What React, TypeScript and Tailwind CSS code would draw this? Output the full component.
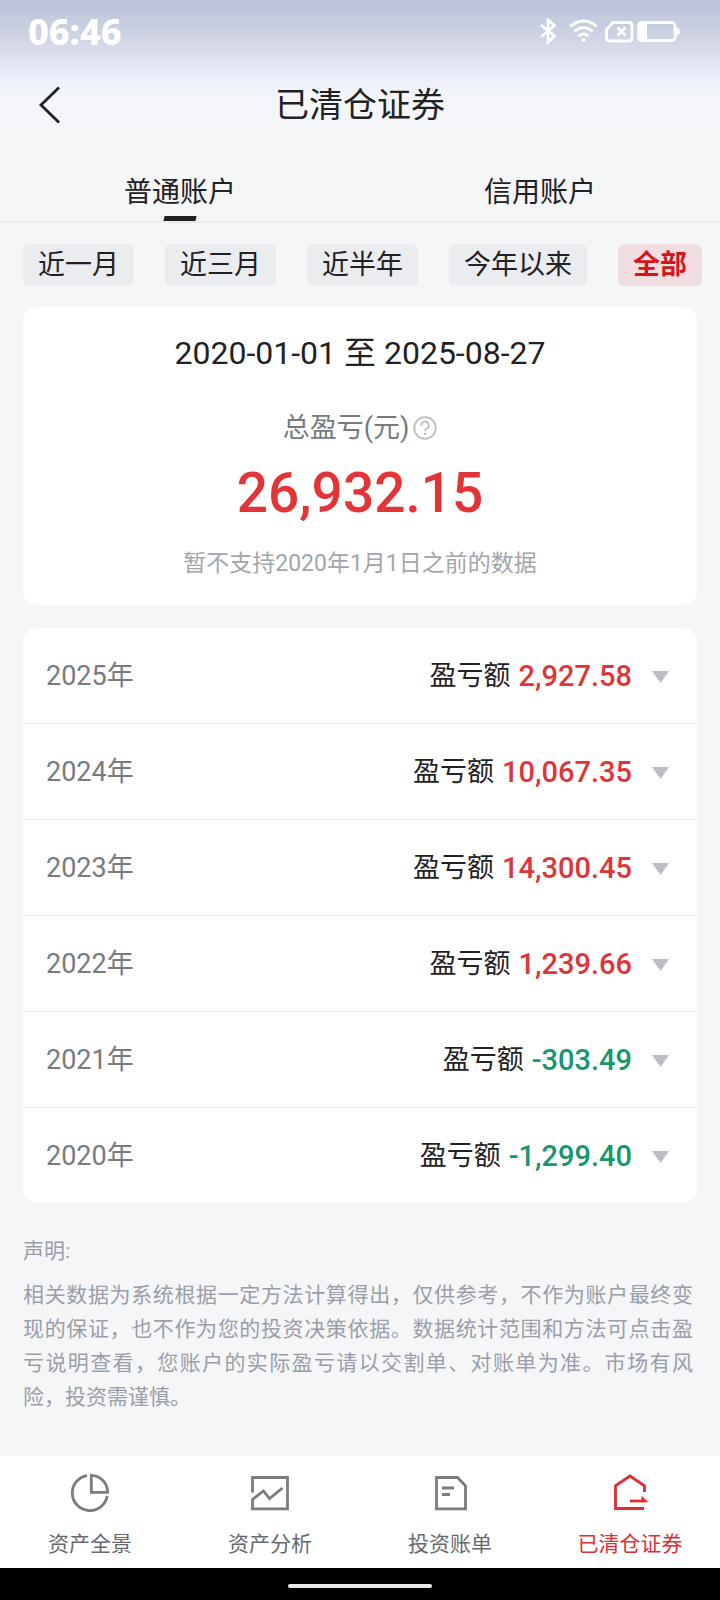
import React, { useState } from "react";
import clsx from "clsx";

interface YearProfit {
  year: number;
  amount: string;
}

interface NavItem {
  label: string;
  icon: React.ReactNode;
  active?: boolean;
}

const ACCOUNTS = ["普通账户", "信用账户"];
const RANGES = ["近一月", "近三月", "近半年", "今年以来", "全部"];

const YEARS: YearProfit[] = [
  { year: 2025, amount: "2,927.58" },
  { year: 2024, amount: "10,067.35" },
  { year: 2023, amount: "14,300.45" },
  { year: 2022, amount: "1,239.66" },
  { year: 2021, amount: "-303.49" },
  { year: 2020, amount: "-1,299.40" },
];

const NAV_ITEMS: NavItem[] = [
  {
    label: "资产全景",
    icon: (
      <>
        <path d="M17 2.6A17.6 17.6 0 1 0 37.2 23" />
        <path d="M21.3 2.4V19.3H37.6A16.6 16.6 0 0 0 21.3 2.4Z" />
      </>
    ),
  },
  {
    label: "资产分析",
    icon: <path d="M2.5 19.5V4.5H37.5V35.8H2.5V26.5L13.5 18L19.5 25.5L32.5 15" />,
  },
  {
    label: "投资账单",
    icon: (
      <>
        <path d="M6.5 4.5H27.5L35.5 12.8V35.8H6.5Z" />
        <path d="M12 15H24M12 21.5H20" />
      </>
    ),
  },
  {
    label: "已清仓证券",
    active: true,
    icon: (
      <>
        <path d="M34.5 19V12.8L20 3L5.5 12.8V35.5H34" />
        <path d="M20 28H35" />
        <path d="M31.5 22.8L38.5 29.3H31.5Z" fill="currentColor" stroke="none" />
      </>
    ),
  },
];

function StatusBar() {
  return (
    <div className="flex h-16 items-center justify-between pl-7 pr-10 text-white">
      <span className="font-['Noto_Sans',sans-serif] text-4xl font-extrabold">06:46</span>
      <svg width="142" height="28" viewBox="0 0 142 28" fill="none" stroke="currentColor" strokeWidth="2.8" aria-hidden="true">
        <path d="M3 7L16.5 18L10 24V2L16.5 7.500L3 19" strokeWidth="2.8" />
        <path d="M32.5 8.500A18 18 0 0 1 58.5 8.500" strokeWidth="3" />
        <path d="M36.5 13.500A12.5 12.5 0 0 1 54.5 13.500" strokeWidth="3" />
        <path d="M40.5 18A7 7 0 0 1 50.500 18" strokeWidth="3" />
        <circle cx="45.5" cy="22" r="2" fill="currentColor" stroke="none" />
        <path d="M75 4.500H91Q94 4.500 94 7.500V20Q94 23 91 23H71.500Q68.500 23 68.500 20V11.500Z" />
        <path d="M79.500 9.500L87.500 17.500M87.500 9.500L79.500 17.500" />
        <rect x="100.500" y="4.500" width="36.500" height="18" rx="3" />
        <rect x="100" y="4" width="9" height="19" fill="currentColor" stroke="none" />
        <path d="M138 9Q142 10.500 142 13.500T138 18Z" fill="currentColor" stroke="none" />
      </svg>
    </div>
  );
}

function YearRow({ year, amount }: YearProfit) {
  return (
    <li className="border-b border-[#eceeef] last:border-b-0">
      <button type="button" className="flex h-[95px] w-full items-center px-[23px] pt-0.5 text-[27px]">
        <span className="text-[#777b80]">{year}年</span>
        <span className="ml-auto">盈亏额</span>
        <span className={clsx("ml-2 text-[29px] font-medium", amount.startsWith("-") ? "text-[#1a966c]" : "text-[#dd3639]")}>{amount}</span>
        <svg className="ml-5 mr-1" width="18" height="12" viewBox="0 0 18 12" aria-hidden="true">
          <path d="M0 0H17L8.5 12Z" fill="#bdbdc5" />
        </svg>
      </button>
    </li>
  );
}

export default function App() {
  const [account, setAccount] = useState("普通账户");
  const [range, setRange] = useState("全部");

  return (
    <div className="flex min-h-screen flex-col overflow-x-hidden bg-[#f4f6f8] font-[Roboto,'Noto_Sans_CJK_SC',sans-serif] text-[#1f2124]">
      <div className="bg-[linear-gradient(to_bottom,#bbc3da_0px,#cbd1e3_32px,#dcdfed_56px,#eaeef8_76px,#f4f6fb_96px,#f4f6f8_144px)]">
        <StatusBar />
        <header className="grid h-20 grid-cols-[1fr_auto_1fr] items-center px-8">
          <button type="button" aria-label="返回" className="flex w-9 justify-center">
            <svg width="36" height="40" viewBox="0 0 36 40" fill="none" stroke="currentColor" strokeWidth="2.8">
              <path d="M27 3.5L9 21L27 38.5" />
            </svg>
          </button>
          <h1 className="pt-0.5 text-[34px]">已清仓证券</h1>
        </header>
      </div>

      <div role="tablist" className="flex h-[79px] border-b-2 border-[#ebecef]">
        {ACCOUNTS.map((name) => (
          <button
            key={name}
            type="button"
            role="tab"
            aria-selected={account === name}
            onClick={() => setAccount(name)}
            className="relative flex-1 pt-5 text-[28px]"
          >
            {name}
            {account === name && <span className="absolute bottom-0 left-1/2 h-[5px] w-8 -translate-x-1/2 -skew-x-12 bg-[#1f2124]" />}
          </button>
        ))}
      </div>

      <main className="flex-1 px-[23px] pt-[21px]">
        <div className="flex gap-[31px] whitespace-nowrap">
          {RANGES.map((name) => (
            <button
              key={name}
              type="button"
              aria-pressed={range === name}
              onClick={() => setRange(name)}
              className={clsx(
                "h-[42px] shrink-0 rounded-md px-[15px] text-[27px] leading-[42px]",
                range === name ? "bg-[#f2dde1] font-bold text-[#d5151c]" : "bg-[#ebecef]"
              )}
            >
              {name}
            </button>
          ))}
        </div>

        <section className="mt-[21px] flex flex-col items-center rounded-[14px] bg-white pt-[26px] pb-[26px]">
          <p className="text-[32px] leading-[40px]">2020-01-01 至 2025-08-27</p>
          <div className="mt-[37px] flex items-center gap-1 text-[27px] leading-[36px] text-[#777b80]">
            总盈亏(元)
            <button type="button" aria-label="总盈亏说明">
              <svg width="24" height="24" viewBox="0 0 24 24" fill="none" stroke="#bcbec2" strokeWidth="1.8">
                <circle cx="12" cy="12" r="10.8" />
                <path d="M8.3 9.5A3.7 3.7 0 1 1 13.8 12.5Q12 13.5 12 15.2" />
                <circle cx="12" cy="18" r="1.2" fill="#bcbec2" stroke="none" />
              </svg>
            </button>
          </div>
          <p className="mt-[17px] text-[55px] leading-[60px] font-medium text-[#e33437]">26,932.15</p>
          <p className="mt-[26px] text-[23px] leading-[30px] text-[#a2a5aa]">暂不支持2020年1月1日之前的数据</p>
        </section>

        <ul className="mt-[23px] rounded-[14px] bg-white">
          {YEARS.map((item) => (
            <YearRow key={item.year} {...item} />
          ))}
        </ul>

        <section className="mt-[31px] mr-1 pb-8 text-[21px] leading-[34px] text-[#9a9ea8]">
          <h2>声明:</h2>
          <p className="mt-[10px] text-justify">
            相关数据为系统根据一定方法计算得出，仅供参考，不作为账户最终变现的保证，也不作为您的投资决策依据。数据统计范围和方法可点击盈亏说明查看，您账户的实际盈亏请以交割单、对账单为准。市场有风险，投资需谨慎。
          </p>
        </section>
      </main>

      <nav className="flex h-28 bg-white">
        {NAV_ITEMS.map(({ label, icon, active }) => (
          <a
            key={label}
            href="#"
            aria-current={active ? "page" : undefined}
            className={clsx("flex flex-1 flex-col items-center pt-[17px] text-[21px]", active ? "text-[#dd2f36]" : "text-[#666a70]")}
          >
            <svg width="40" height="40" viewBox="0 0 40 40" fill="none" stroke={active ? "currentColor" : "#7b7b82"} strokeWidth="2.8" aria-hidden="true">
              {icon}
            </svg>
            <span className="mt-[15px] leading-[32px]">{label}</span>
          </a>
        ))}
      </nav>
      <div className="flex h-8 items-center justify-center bg-black pt-1">
        <div className="h-1 w-36 rounded-full bg-[#e8e8e8]" />
      </div>
    </div>
  );
}
